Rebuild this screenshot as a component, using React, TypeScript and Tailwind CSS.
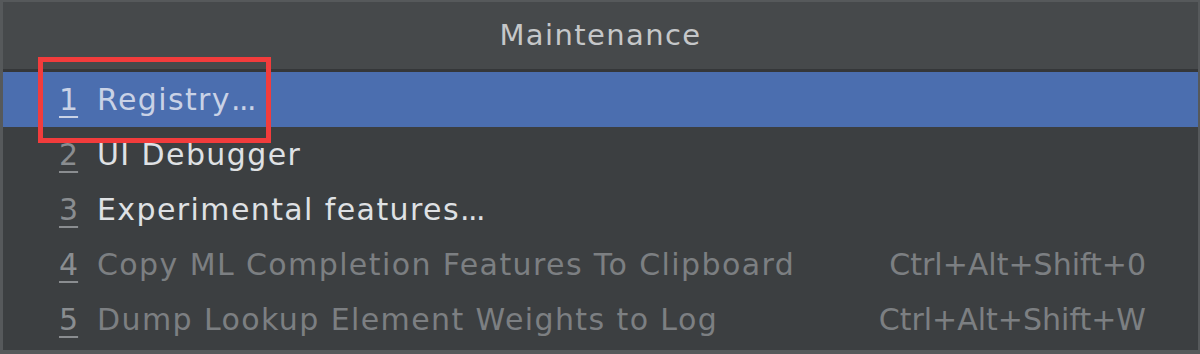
const items = [
  { n: '1', label: 'Registry', dots: true, selected: true, disabled: false, shortcut: '' },
  { n: '2', label: 'UI Debugger', dots: false, selected: false, disabled: false, shortcut: '' },
  { n: '3', label: 'Experimental features', dots: true, selected: false, disabled: false, shortcut: '' },
  { n: '4', label: 'Copy ML Completion Features To Clipboard', dots: false, selected: false, disabled: true, shortcut: 'Ctrl+Alt+Shift+0' },
  { n: '5', label: 'Dump Lookup Element Weights to Log', dots: false, selected: false, disabled: true, shortcut: 'Ctrl+Alt+Shift+W' },
]

export default function App() {
  return (
    <div
      className="relative w-[1200px] h-[354px] bg-[#3c3f41] border-l-[3px] border-r-[2px] border-b-[4px] border-t-[2px] border-[#56595b] overflow-hidden"
      style={{ fontFamily: '"DejaVu Sans", "Noto Sans", sans-serif' }}
    >
      <div className="h-[70px] bg-[#46494b] flex items-center justify-center text-[29px] tracking-[1.4px] text-[#c5c7c9] border-b-[3px] border-[#353739]">
        Maintenance
      </div>
      <div className="flex flex-col">
        {items.map(item => (
          <div
            key={item.n}
            className={
              'h-[55px] flex items-center pl-[56px] pr-[52px] text-[30px] ' +
              (item.selected ? 'bg-[#4b6eaf] text-[#c9d2e6]' : item.disabled ? 'text-[#7c7f82]' : 'text-[#dfe1e4]')
            }
          >
            <span className={'underline underline-offset-[6px] decoration-2 w-[38px] ' + (item.selected ? 'text-[#c9d2e6]' : 'text-[#8a8d90]')}>
              {item.n}
            </span>
            <span className="flex-1 tracking-[1.4px]">
              {item.label}
              {item.dots && <span className="tracking-[-1.5px]">...</span>}
            </span>
            {item.shortcut && <span className="text-[#7c7f82]">{item.shortcut}</span>}
          </div>
        ))}
      </div>
      <div className="absolute left-[35px] top-[55px] w-[233px] h-[86px] border-[5px] border-[#f23c3c]" />
    </div>
  )
}
